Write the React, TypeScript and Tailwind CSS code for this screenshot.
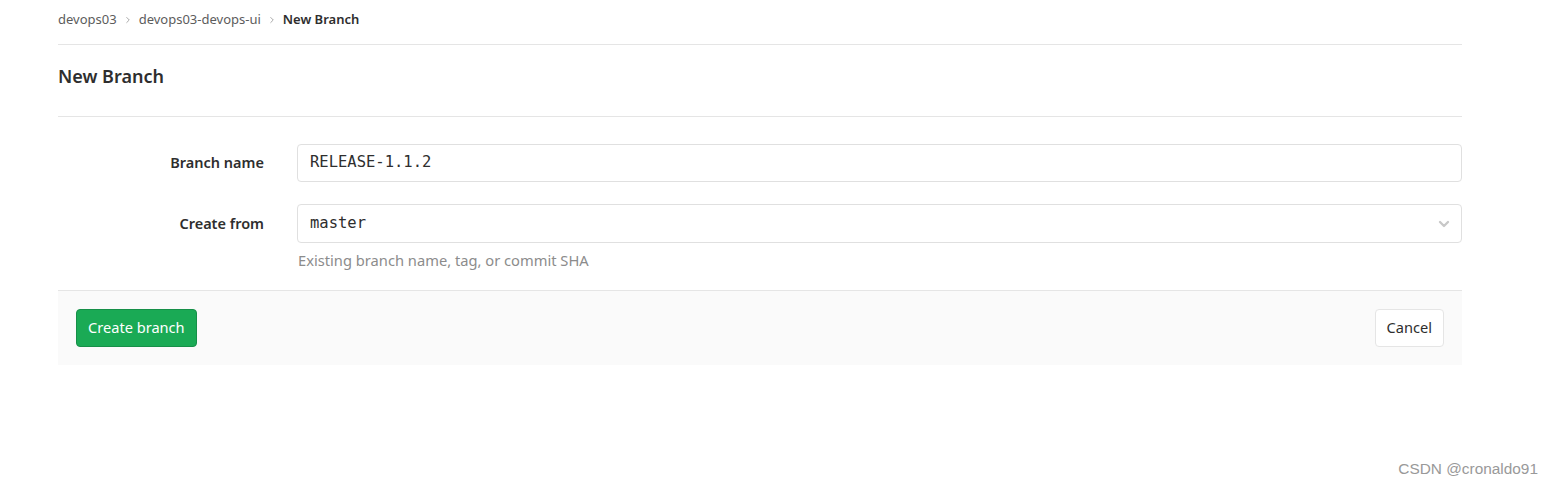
import { ChevronRight, ChevronDown } from 'lucide-react'

const font = { fontFamily: '"Noto Sans", "Open Sans", sans-serif' }
const mono = { fontFamily: '"DejaVu Sans Mono", monospace' }

export default function App() {
  return (
    <div className="relative h-[484px] w-[1554px] bg-white text-[#2e2e2e]" style={font}>
      <div className="ml-[58px] w-[1404px]">
        {/* breadcrumb */}
        <div className="flex h-[45px] items-center gap-[6px] border-b border-[#e5e5e5] pb-[4px] text-[13px]">
          <span className="text-[#5c5c5c]">devops03</span>
          <ChevronRight size={10} strokeWidth={2} className="text-[#999]" />
          <span className="text-[#5c5c5c]">devops03-devops-ui</span>
          <ChevronRight size={10} strokeWidth={2} className="text-[#999]" />
          <span className="font-semibold text-[#2e2e2e]">New Branch</span>
        </div>

        {/* title */}
        <div className="flex h-[72px] items-center border-b border-[#e5e5e5] pb-[8px]">
          <h1 className="text-[18px] font-semibold text-[#2e2e2e]">New Branch</h1>
        </div>

        {/* form */}
        <div className="pt-[27px]">
          <div className="flex items-center">
            <label className="w-[206px] text-right text-[14.5px] font-semibold text-[#2e2e2e]">Branch name</label>
            <div className="ml-[33px] flex h-[38px] flex-1 items-center rounded border border-[#e0e0e0] px-[12px]">
              <span className="text-[15.5px] text-[#2e2e2e]" style={mono}>
                RELEASE-1.1.2
              </span>
            </div>
          </div>
          <div className="mt-[22px] flex items-center">
            <label className="w-[206px] text-right text-[14.5px] font-semibold text-[#2e2e2e]">Create from</label>
            <div className="ml-[33px] flex h-[39px] flex-1 items-center justify-between rounded border border-[#e0e0e0] pl-[12px] pr-[9px]">
              <span className="text-[15.5px] text-[#2e2e2e]" style={mono}>
                master
              </span>
              <ChevronDown size={16} strokeWidth={3.5} className="text-[#c8c8c8]" />
            </div>
          </div>
          <div className="ml-[240px] mt-[6px] h-[41px] text-[14.7px] text-[#8c8c8c]">
            Existing branch name, tag, or commit SHA
          </div>
        </div>

        {/* footer */}
        <div className="flex h-[75px] items-center justify-between border-t border-[#e5e5e5] bg-[#fafafa] px-[18px]">
          <button className="h-[38px] rounded border border-[#168f48] bg-[#1aaa55] px-[11px] text-[14.6px] text-white">
            Create branch
          </button>
          <button className="h-[38px] rounded border border-[#e5e5e5] bg-white px-[11px] text-[14.6px] text-[#2e2e2e]">
            Cancel
          </button>
        </div>
      </div>

      <div
        className="absolute right-[16px] top-[457px] text-[15.4px] text-[#999]"
        style={{ fontFamily: '"Liberation Sans", sans-serif' }}
      >
        CSDN @cronaldo91
      </div>
    </div>
  )
}
